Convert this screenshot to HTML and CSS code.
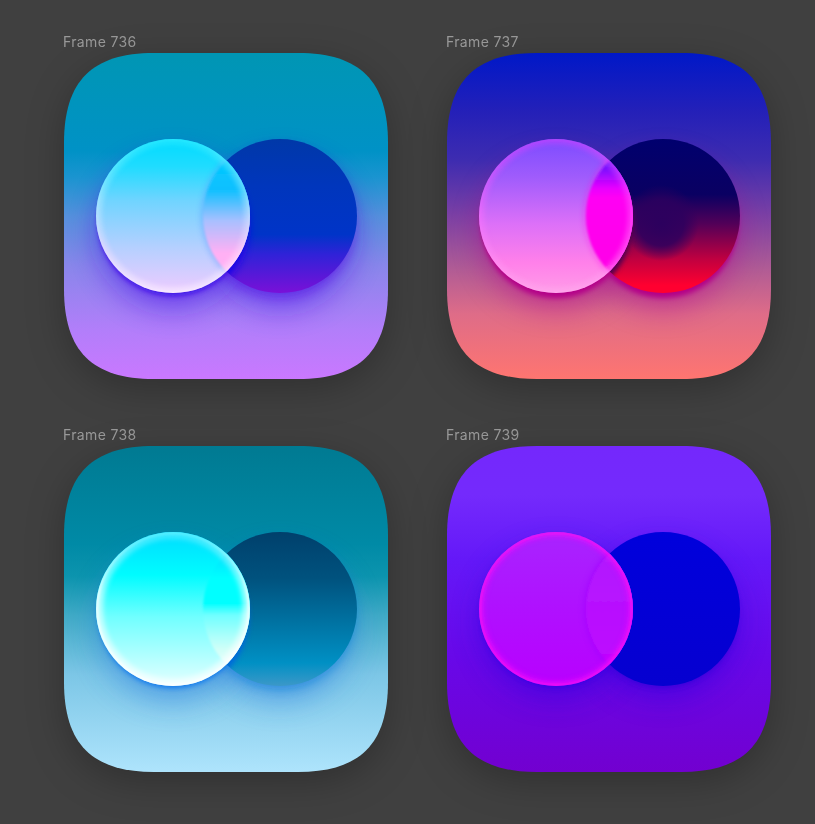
FILE: index.html
```html
<!DOCTYPE html>
<html lang="en">
<head>
<meta charset="utf-8">
<title>Frames</title>
<link rel="stylesheet" href="styles.css">
</head>
<body>
<main class="board">
  <section class="frame">
    <div class="label">Frame 736</div>
    <svg class="icon" viewBox="0 0 324 326" width="324" height="326">
      <defs>
        <path id="squircle" d="M90 0H234C296 0 324 28 324 90V236C324 298 296 326 234 326H90C28 326 0 298 0 236V90C0 28 28 0 90 0Z"/>
        <clipPath id="clipIcon"><use href="#squircle"/></clipPath>
        <clipPath id="clipLeft"><circle cx="109" cy="163" r="77"/></clipPath>
        <clipPath id="clipRight"><circle cx="216" cy="163" r="77"/></clipPath>
        <filter id="blurWide" x="-50%" y="-50%" width="200%" height="200%"><feGaussianBlur stdDeviation="15"/></filter>
        <filter id="blurMid" x="-30%" y="-30%" width="160%" height="160%"><feGaussianBlur stdDeviation="5"/></filter>
        <filter id="blurSoft" x="-20%" y="-20%" width="140%" height="140%"><feGaussianBlur stdDeviation="2.5"/></filter>
        <filter id="blurRim" x="-20%" y="-20%" width="140%" height="140%"><feGaussianBlur stdDeviation="1"/></filter>
        <linearGradient id="aBg" x1="0" y1="0" x2="0" y2="1">
          <stop offset="0" stop-color="#0096b4"/><stop offset=".3" stop-color="#0092c6"/><stop offset=".38" stop-color="#1a94d0"/><stop offset=".5" stop-color="#5590dc"/><stop offset=".65" stop-color="#8886ea"/><stop offset=".85" stop-color="#b27efa"/><stop offset="1" stop-color="#ca78ff"/>
        </linearGradient>
        <linearGradient id="aRight" x1="0" y1="0" x2="0" y2="1">
          <stop offset="0" stop-color="#0038a8"/><stop offset=".3" stop-color="#0036bc"/><stop offset=".62" stop-color="#0034c8"/><stop offset=".75" stop-color="#3022d8"/><stop offset="1" stop-color="#7a10d8"/>
        </linearGradient>
        <linearGradient id="aLeft" x1="0" y1="0" x2="0" y2="1">
          <stop offset="0" stop-color="#00dcff"/><stop offset=".18" stop-color="#20dcff"/><stop offset=".4" stop-color="#70d4ff"/><stop offset=".7" stop-color="#b4d0ff"/><stop offset="1" stop-color="#eecbff"/>
        </linearGradient>
        <linearGradient id="aLens" x1="0" y1="0" x2="0" y2="1">
          <stop offset=".16" stop-color="#00c8ff"/><stop offset=".33" stop-color="#10c0ff"/><stop offset=".53" stop-color="#a8c0ff"/><stop offset=".74" stop-color="#ffb0f4"/><stop offset="1" stop-color="#ffb0f4"/>
        </linearGradient>
        <linearGradient id="aRim" x1="0" y1="0" x2="0" y2="1">
          <stop offset="0" stop-color="#40f0ff"/><stop offset=".4" stop-color="#c8f0ff"/><stop offset=".7" stop-color="#ffe0ff"/><stop offset="1" stop-color="#ffffff"/>
        </linearGradient>
      </defs>
      <g clip-path="url(#clipIcon)">
        <rect width="324" height="326" fill="url(#aBg)"/>
        <circle cx="216" cy="180" r="74" fill="#4a18e8" opacity=".65" filter="url(#blurWide)"/>
        <circle cx="109" cy="180" r="74" fill="#4a18e8" opacity=".65" filter="url(#blurWide)"/>
        <circle cx="216" cy="168" r="75" fill="#5a14e0" opacity=".5" filter="url(#blurMid)"/>
        <circle cx="109" cy="168" r="75" fill="#3a08e8" opacity=".85" filter="url(#blurSoft)"/>
        <circle cx="216" cy="163" r="77" fill="url(#aRight)"/>
        <g clip-path="url(#clipRight)"><circle cx="107" cy="173" r="77" fill="#1400e8" filter="url(#blurMid)"/></g>
        <circle cx="109" cy="163" r="77" fill="url(#aLeft)"/>
        <g clip-path="url(#clipLeft)">
          <circle cx="216" cy="163" r="80" fill="#5090ff" opacity=".3" filter="url(#blurSoft)"/>
          <circle cx="216" cy="163" r="77" fill="url(#aLens)" filter="url(#blurRim)"/>
          <circle cx="109" cy="163" r="75" fill="none" stroke="url(#aRim)" stroke-width="7" opacity=".45" filter="url(#blurSoft)"/>
          <circle cx="109" cy="163" r="76.5" fill="none" stroke="url(#aRim)" stroke-width="2" opacity=".45" filter="url(#blurRim)"/>
        </g>
      </g>
    </svg>
  </section>

  <section class="frame">
    <div class="label">Frame 737</div>
    <svg class="icon" viewBox="0 0 324 326" width="324" height="326">
      <defs>
        <linearGradient id="bBg" x1="0" y1="0" x2="0" y2="1">
          <stop offset="0" stop-color="#0018c8"/><stop offset=".18" stop-color="#2420b8"/><stop offset=".33" stop-color="#3e2cb0"/><stop offset=".5" stop-color="#7c40a4"/><stop offset=".65" stop-color="#ac5a96"/><stop offset=".8" stop-color="#de6c88"/><stop offset="1" stop-color="#ff7570"/>
        </linearGradient>
        <linearGradient id="bRight" x1="0" y1="0" x2="0" y2="1">
          <stop offset="0" stop-color="#00006e"/><stop offset=".36" stop-color="#0a0062"/><stop offset=".55" stop-color="#520058"/><stop offset=".78" stop-color="#c00040"/><stop offset=".95" stop-color="#ff0030"/><stop offset="1" stop-color="#ff0030"/>
        </linearGradient>
        <radialGradient id="bSpot" cx="214" cy="170" r="38" gradientUnits="userSpaceOnUse">
          <stop offset="0" stop-color="#2c005e"/><stop offset=".6" stop-color="#2c005e" stop-opacity=".85"/><stop offset="1" stop-color="#2c005e" stop-opacity="0"/>
        </radialGradient>
        <linearGradient id="bLeft" x1="0" y1="0" x2="0" y2="1">
          <stop offset="0" stop-color="#7c4cff"/><stop offset=".25" stop-color="#a05cfc"/><stop offset=".55" stop-color="#dc70f8"/><stop offset=".8" stop-color="#ff80ea"/><stop offset="1" stop-color="#ff9ce8"/>
        </linearGradient>
        <linearGradient id="bLens" x1="0" y1="0" x2="0" y2="1">
          <stop offset=".16" stop-color="#6014ff"/><stop offset=".32" stop-color="#e800ff"/><stop offset=".38" stop-color="#ff00f4"/><stop offset=".8" stop-color="#ff00e8"/><stop offset="1" stop-color="#ff40d8"/>
        </linearGradient>
        <linearGradient id="bRim" x1="0" y1="0" x2="0" y2="1">
          <stop offset="0" stop-color="#e040ff"/><stop offset=".5" stop-color="#ff70ff"/><stop offset="1" stop-color="#ffb0f0"/>
        </linearGradient>
      </defs>
      <g clip-path="url(#clipIcon)">
        <rect width="324" height="326" fill="url(#bBg)"/>
        <circle cx="216" cy="180" r="74" fill="#b00090" opacity=".55" filter="url(#blurWide)"/>
        <circle cx="109" cy="180" r="74" fill="#b00090" opacity=".55" filter="url(#blurWide)"/>
        <circle cx="216" cy="170" r="75" fill="#b40088" filter="url(#blurSoft)"/>
        <circle cx="109" cy="170" r="75" fill="#b40088" filter="url(#blurSoft)"/>
        <circle cx="216" cy="163" r="77" fill="url(#bRight)"/>
        <circle cx="216" cy="163" r="77" fill="url(#bSpot)"/>
        <g clip-path="url(#clipRight)"><circle cx="109" cy="170" r="77" fill="#500050" filter="url(#blurSoft)"/></g>
        <circle cx="109" cy="163" r="77" fill="url(#bLeft)"/>
        <g clip-path="url(#clipLeft)">
          <circle cx="216" cy="163" r="80" fill="#ff10f0" opacity=".3" filter="url(#blurSoft)"/>
          <circle cx="216" cy="163" r="77" fill="url(#bLens)" filter="url(#blurRim)"/>
          <circle cx="109" cy="163" r="75" fill="none" stroke="url(#bRim)" stroke-width="6" opacity=".45" filter="url(#blurSoft)"/>
          <circle cx="109" cy="163" r="76.5" fill="none" stroke="url(#bRim)" stroke-width="2" opacity=".4" filter="url(#blurRim)"/>
        </g>
      </g>
    </svg>
  </section>

  <section class="frame">
    <div class="label">Frame 738</div>
    <svg class="icon" viewBox="0 0 324 326" width="324" height="326">
      <defs>
        <linearGradient id="cBg" x1="0" y1="0" x2="0" y2="1">
          <stop offset="0" stop-color="#007a92"/><stop offset=".3" stop-color="#008aa6"/><stop offset=".4" stop-color="#0c94ae"/><stop offset=".52" stop-color="#40aac6"/><stop offset=".7" stop-color="#7cc6e6"/><stop offset="1" stop-color="#aee4fc"/>
        </linearGradient>
        <linearGradient id="cRight" x1="0" y1="0" x2="0" y2="1">
          <stop offset="0" stop-color="#00406c"/><stop offset=".3" stop-color="#00527e"/><stop offset=".6" stop-color="#0074a4"/><stop offset=".85" stop-color="#0090c4"/><stop offset="1" stop-color="#3c98c8"/>
        </linearGradient>
        <linearGradient id="cLeft" x1="0" y1="0" x2="0" y2="1">
          <stop offset="0" stop-color="#00dcff"/><stop offset=".28" stop-color="#00fcff"/><stop offset=".55" stop-color="#70ffff"/><stop offset=".8" stop-color="#b0ffff"/><stop offset="1" stop-color="#e4ffff"/>
        </linearGradient>
        <linearGradient id="cLens" x1="0" y1="0" x2="0" y2="1">
          <stop offset=".16" stop-color="#00e4ff"/><stop offset=".3" stop-color="#00ffff"/><stop offset=".46" stop-color="#00ffff"/><stop offset=".54" stop-color="#70ffff"/><stop offset=".76" stop-color="#d0fff8"/><stop offset="1" stop-color="#ffffff"/>
        </linearGradient>
        <linearGradient id="cRim" x1="0" y1="0" x2="0" y2="1">
          <stop offset="0" stop-color="#60f0ff"/><stop offset=".4" stop-color="#ffffff"/><stop offset="1" stop-color="#ffffff"/>
        </linearGradient>
      </defs>
      <g clip-path="url(#clipIcon)">
        <rect width="324" height="326" fill="url(#cBg)"/>
        <circle cx="216" cy="180" r="74" fill="#2a80e0" opacity=".6" filter="url(#blurWide)"/>
        <circle cx="109" cy="180" r="74" fill="#2a80e0" opacity=".6" filter="url(#blurWide)"/>
        <circle cx="216" cy="168" r="75" fill="#1080d8" opacity=".55" filter="url(#blurMid)"/>
        <circle cx="109" cy="167" r="75" fill="#0070f0" opacity=".85" filter="url(#blurSoft)"/>
        <circle cx="216" cy="163" r="77" fill="url(#cRight)"/>
        <g clip-path="url(#clipRight)"><circle cx="108" cy="171" r="77" fill="#0060e0" opacity=".8" filter="url(#blurSoft)"/></g>
        <circle cx="109" cy="163" r="77" fill="url(#cLeft)"/>
        <g clip-path="url(#clipLeft)">
          <circle cx="216" cy="163" r="77" fill="url(#cLens)" filter="url(#blurRim)"/>
          <circle cx="109" cy="163" r="74" fill="none" stroke="url(#cRim)" stroke-width="8" opacity=".6" filter="url(#blurSoft)"/>
          <circle cx="109" cy="163" r="76" fill="none" stroke="url(#cRim)" stroke-width="3" opacity=".8" filter="url(#blurRim)"/>
        </g>
      </g>
    </svg>
  </section>

  <section class="frame">
    <div class="label">Frame 739</div>
    <svg class="icon" viewBox="0 0 324 326" width="324" height="326">
      <defs>
        <linearGradient id="dBg" x1="0" y1="0" x2="0" y2="1">
          <stop offset="0" stop-color="#7428fc"/><stop offset=".15" stop-color="#742afc"/><stop offset=".35" stop-color="#6418f8"/><stop offset=".65" stop-color="#6808e8"/><stop offset="1" stop-color="#7200d0"/>
        </linearGradient>
        <linearGradient id="dRight" x1="0" y1="0" x2="0" y2="1">
          <stop offset="0" stop-color="#0000dc"/><stop offset="1" stop-color="#0600d0"/>
        </linearGradient>
        <linearGradient id="dLeft" x1="0" y1="0" x2="0" y2="1">
          <stop offset="0" stop-color="#a824ff"/><stop offset=".5" stop-color="#b010ff"/><stop offset="1" stop-color="#b800ff"/>
        </linearGradient>
        <linearGradient id="dLens" x1="0" y1="0" x2="0" y2="1">
          <stop offset="0" stop-color="#b020ff"/><stop offset="1" stop-color="#c000ff"/>
        </linearGradient>
      </defs>
      <g clip-path="url(#clipIcon)">
        <rect width="324" height="326" fill="url(#dBg)"/>
        <circle cx="216" cy="176" r="74" fill="#3000e0" opacity=".65" filter="url(#blurWide)"/>
        <circle cx="109" cy="176" r="74" fill="#3000e0" opacity=".65" filter="url(#blurWide)"/>
        <circle cx="216" cy="167" r="75" fill="#3000d8" opacity=".6" filter="url(#blurSoft)"/>
        <circle cx="109" cy="166" r="75" fill="#2800e8" opacity=".6" filter="url(#blurSoft)"/>
        <circle cx="216" cy="163" r="77" fill="url(#dRight)"/>
        <circle cx="109" cy="163" r="77" fill="url(#dLeft)"/>
        <g clip-path="url(#clipLeft)">
          <circle cx="216" cy="163" r="80" fill="#a000ff" opacity=".5" filter="url(#blurSoft)"/>
          <circle cx="216" cy="163" r="77" fill="url(#dLens)" filter="url(#blurRim)"/>
          <circle cx="109" cy="163" r="75" fill="none" stroke="#f010ff" stroke-width="6" opacity=".55" filter="url(#blurSoft)"/>
          <circle cx="109" cy="163" r="76" fill="none" stroke="#ff10f0" stroke-width="3" opacity=".6" filter="url(#blurRim)"/>
        </g>
      </g>
    </svg>
  </section>
</main>
</body>
</html>
```

FILE: styles.css
```css
html, body {
  margin: 0;
  padding: 0;
  height: 100%;
  overflow: hidden;
  background: #404040;
}

.board {
  display: grid;
  grid-template-columns: 324px 324px;
  column-gap: 59px;
  row-gap: 46px;
  padding: 32px 0 0 64px;
}

.frame {
  display: flex;
  flex-direction: column;
}

.label {
  height: 21px;
  line-height: 19px;
  margin-left: -1px;
  font-family: Inter, "Liberation Sans", sans-serif;
  font-size: 14px;
  letter-spacing: 0.35px;
  color: #999999;
  filter: blur(0.35px);
}

.icon {
  display: block;
  overflow: visible;
  filter: drop-shadow(0 10px 18px rgba(0, 0, 0, 0.25)) blur(0.5px);
}
```
